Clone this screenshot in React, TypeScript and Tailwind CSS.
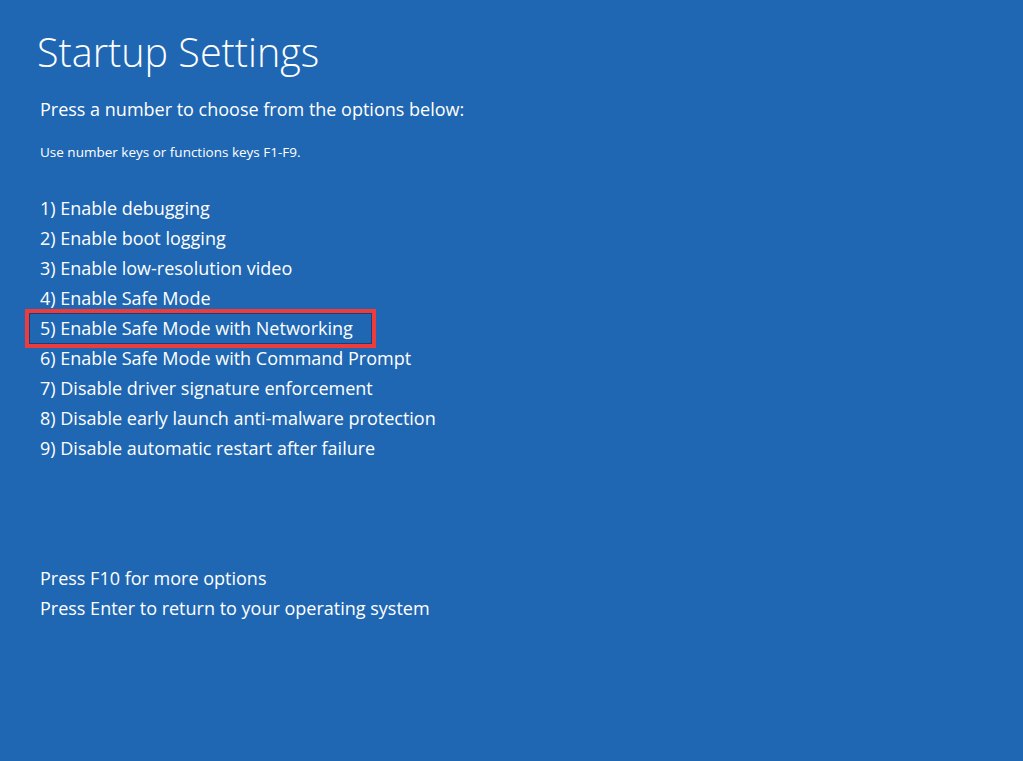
const options = [
  '1) Enable debugging',
  '2) Enable boot logging',
  '3) Enable low-resolution video',
  '4) Enable Safe Mode',
  '5) Enable Safe Mode with Networking',
  '6) Enable Safe Mode with Command Prompt',
  '7) Disable driver signature enforcement',
  '8) Disable early launch anti-malware protection',
  '9) Disable automatic restart after failure',
]

export default function App() {
  return (
    <div
      className="w-[1023px] h-[761px] overflow-hidden bg-[#2067b3] text-white pl-[40px]"
      style={{ fontFamily: '"Open Sans", "Noto Sans", sans-serif' }}
    >
      <h1 className="pt-[26px] text-[39.5px] leading-[52px] font-light -ml-[3px]">Startup Settings</h1>
      <div className="mt-[16px] text-[18px] leading-[30px]">Press a number to choose from the options below:</div>
      <div className="mt-[18px] text-[13.5px] leading-[20px]">Use number keys or functions keys F1-F9.</div>

      {/* boot options, #5 is outlined */}
      <div className="mt-[31px] flex flex-col text-[18px] leading-[30px]">
        {options.map((o, i) => (
          <div key={o} className="relative">
            {o}
            {i === 4 && (
              <div className="absolute left-[-15px] top-[-4px] w-[351px] h-[39px] border-4 border-[#ee3b3b]">
                <div className="w-full h-full border border-[#17407a]" />
              </div>
            )}
          </div>
        ))}
      </div>

      <div className="mt-[100px] flex flex-col text-[18px] leading-[30px]">
        <div>Press F10 for more options</div>
        <div>Press Enter to return to your operating system</div>
      </div>
    </div>
  )
}
